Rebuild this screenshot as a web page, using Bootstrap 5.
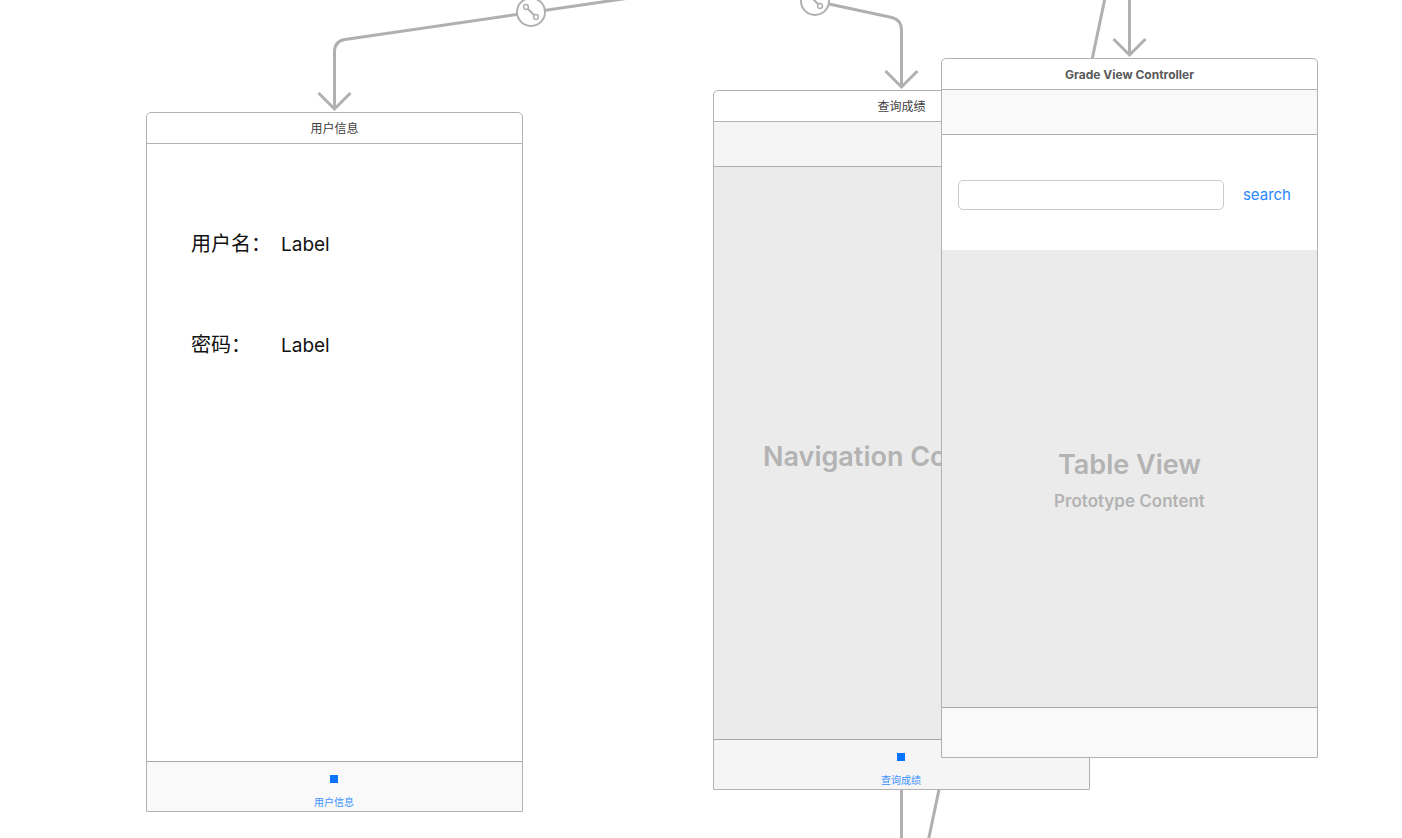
<!DOCTYPE html>
<html lang="zh-CN">
<head>
<meta charset="utf-8">
<meta name="viewport" content="width=device-width, initial-scale=1">
<title>Main.storyboard</title>
<link href="https://cdn.jsdelivr.net/npm/bootstrap@5.3.0/dist/css/bootstrap.min.css" rel="stylesheet">
<style>
  :root { --line: #b2b2b2; --tint: #0a74ff; }
  body { font-family: Inter, "Noto Sans CJK SC", sans-serif; background: #fff; }
  .canvas { min-height: 100vh; }
  .wires { fill: none; stroke: #b0b0b0; stroke-width: 3; }
  /* Scenes are nodes placed freely on the canvas */
  .scene { position: absolute; width: 377px; height: 700px; background: #fff; border: 1px solid var(--line); border-radius: 5px 5px 0 0; }
  .scene-user { left: 146px; top: 112px; }
  .scene-nav { left: 713px; top: 90px; }
  .scene-grade { left: 941px; top: 58px; }
  .scene-title { height: 31px; border-bottom: 1px solid var(--line); font-size: 12px; line-height: 32px; font-weight: 700; color: #595959; }
  .scene-title.zh { font-weight: 400; color: #404040; }
  .top-bar { height: 45px; background: #f9f9f9; border-bottom: 1px solid #b0b0b0; }
  .tab-bar { height: 50px; padding-right: 1px; background: #f9f9f9; border-top: 1px solid #a8a8a8; }
  .scene-nav .top-bar, .scene-nav .tab-bar { background: #f5f5f5; }
  .tab-link { color: #3b92ff; font-size: 10px; line-height: 16px; }
  .tab-icon { width: 8px; height: 8px; background: var(--tint); margin: 13px 0 11px; }
  .stage { padding-top: 8px; background: #ebebeb; color: #b3b3b3; }
  .stage-title { font-size: 27px; line-height: 36px; font-weight: 600; }
  .stage-sub { font-size: 17px; line-height: 36px; font-weight: 600; }
  .info { display: grid; grid-template-columns: 90px 1fr; row-gap: 71px; padding: 85px 44px; font-size: 20px; line-height: 30px; color: #111; }
  .info dd { font-size: 19px; line-height: 32px; }
  .info dt { height: 30px; }
  .info dd { height: 30px; }
  .search-form { height: 115px; padding: 5px 26px 0 16px; gap: 19px; }
  .search-box { height: 30px; border-color: #ccc; border-radius: 5px; }
  .search-btn { color: #2a87ff; font-size: 15px; line-height: 30px; }
</style>
</head>
<body>
<main class="canvas position-relative overflow-hidden">
  <svg class="wires position-absolute top-0 start-0 w-100 h-100" aria-hidden="true">
    <path d="M650 -5L345 39.500Q334.500 41 334.500 52V108.500M318.500 93L334.500 109L350.500 93"/>
    <path d="M815 1L892 17.500Q901.500 20 901.500 30V86.500M885.500 71L901.500 87L917.500 71"/>
    <path d="M1129.500 0V54.500M1113.500 39L1129.500 55L1145.500 39"/>
    <path d="M1105 -2L928 842M901.500 780V840"/>
    <g fill="#fff" stroke-width="2">
      <circle cx="531" cy="12" r="14"/>
      <path d="M527.500 8.500L534.500 15.500"/>
      <circle cx="526" cy="7" r="2.400" stroke-width="1.500"/><circle cx="536" cy="17" r="2.400" stroke-width="1.500"/>
      <circle cx="815" cy="1" r="14"/>
      <path d="M811.500 -2.500L818.500 4.500"/>
      <circle cx="820" cy="6" r="2.400" stroke-width="1.500"/>
    </g>
  </svg>

  <section class="scene scene-user d-flex flex-column">
    <h2 class="scene-title zh text-center mb-0">用户信息</h2>
    <dl class="info flex-grow-1 align-content-start mb-0">
      <dt class="fw-normal">用户名：</dt><dd class="mb-0">Label</dd>
      <dt class="fw-normal">密码：</dt><dd class="mb-0">Label</dd>
    </dl>
    <nav class="tab-bar d-flex justify-content-center">
      <a href="#" class="tab-link d-flex flex-column align-items-center text-decoration-none"><span class="tab-icon"></span>用户信息</a>
    </nav>
  </section>

  <section class="scene scene-nav d-flex flex-column">
    <h2 class="scene-title zh text-center mb-0">查询成绩</h2>
    <div class="top-bar"></div>
    <div class="stage flex-grow-1 d-flex flex-column align-items-center justify-content-center">
      <div class="stage-title text-nowrap">Navigation Controller</div>
    </div>
    <nav class="tab-bar d-flex justify-content-center">
      <a href="#" class="tab-link d-flex flex-column align-items-center text-decoration-none"><span class="tab-icon"></span>查询成绩</a>
    </nav>
  </section>

  <section class="scene scene-grade d-flex flex-column">
    <h2 class="scene-title text-center mb-0">Grade View Controller</h2>
    <div class="top-bar"></div>
    <form class="search-form d-flex align-items-center">
      <input type="text" class="search-box form-control py-0" aria-label="search">
      <button type="button" class="search-btn btn p-0 border-0">search</button>
    </form>
    <div class="stage flex-grow-1 d-flex flex-column align-items-center justify-content-center">
      <div class="stage-title">Table View</div>
      <div class="stage-sub">Prototype Content</div>
    </div>
    <div class="tab-bar"></div>
  </section>
</main>
<script src="https://cdn.jsdelivr.net/npm/bootstrap@5.3.0/dist/js/bootstrap.bundle.min.js"></script>
</body>
</html>
